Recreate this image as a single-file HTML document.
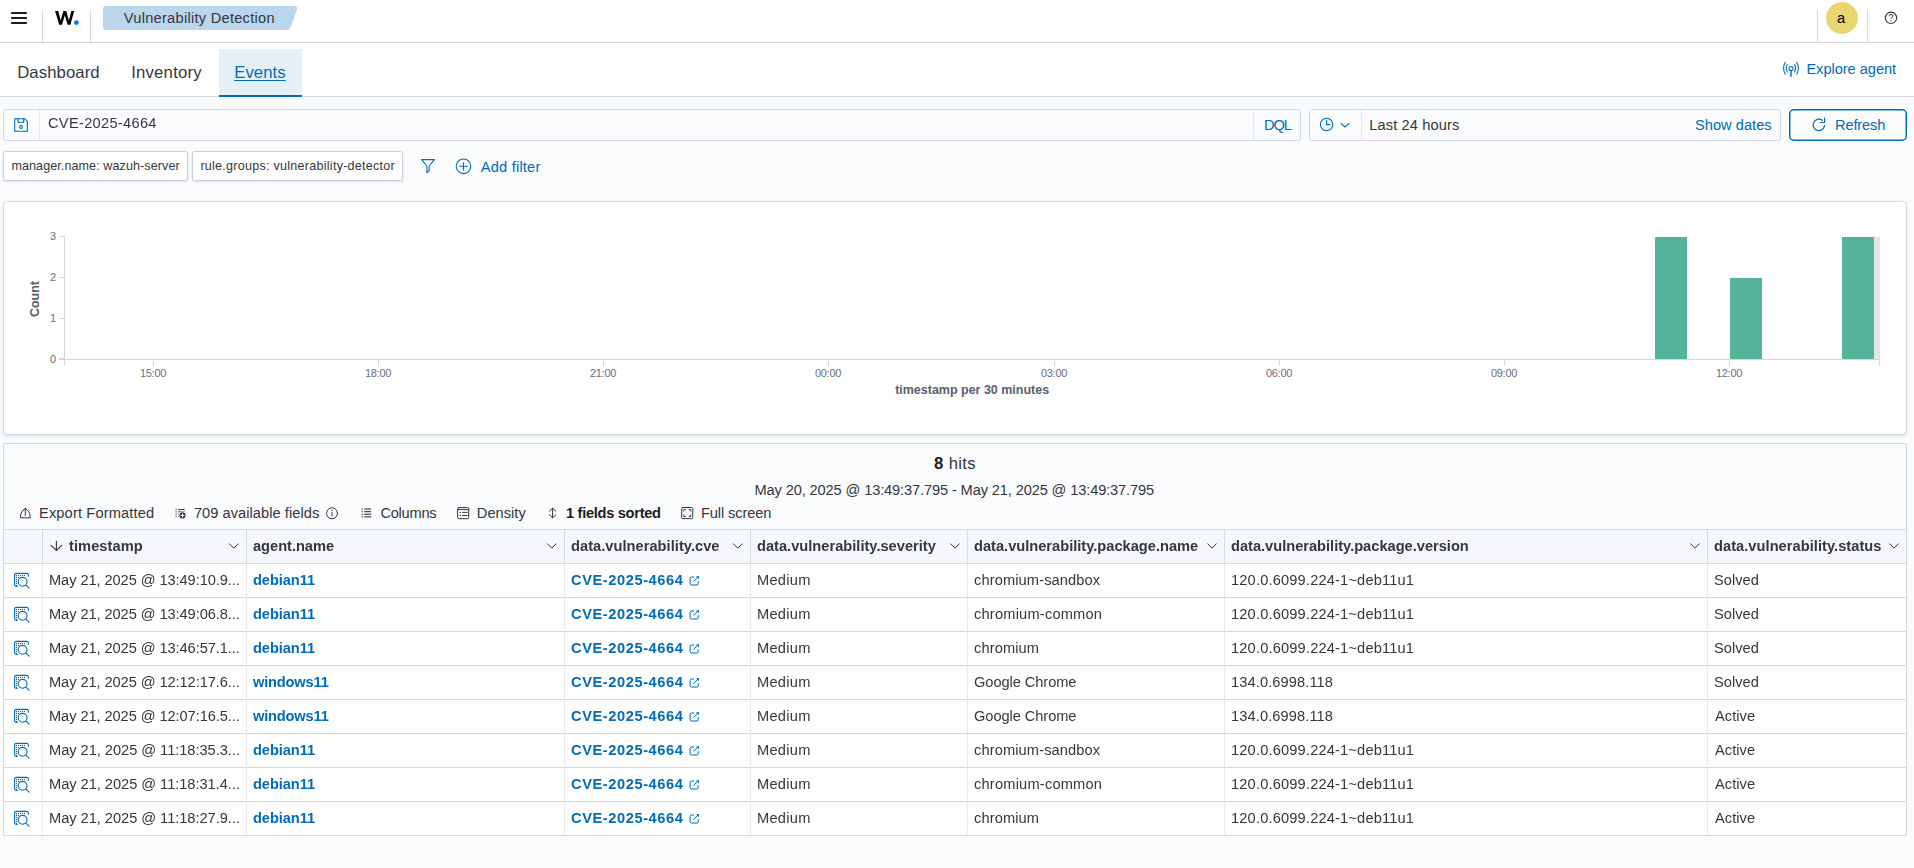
<!DOCTYPE html>
<html><head><meta charset="utf-8"><title>Wazuh - Vulnerability Detection</title>
<style>
html,body{margin:0;padding:0;}
body{width:1914px;height:868px;overflow:hidden;position:relative;background:#FAFBFD;font-family:"Liberation Sans",sans-serif;color:#343741;}
.t{position:absolute;white-space:nowrap;line-height:1;}
svg{position:absolute;overflow:visible;}
</style></head><body>
<svg width="1914" height="868" viewBox="0 0 1914 868" style="left:0;top:0"><defs><filter id="sh" x="-5%" y="-30%" width="110%" height="170%"><feDropShadow dx="0" dy="1" stdDeviation="0.8" flood-color="#98A2B3" flood-opacity="0.35"/></filter><filter id="sh2" x="-2%" y="-5%" width="104%" height="115%"><feDropShadow dx="0" dy="1.5" stdDeviation="1.5" flood-color="#98A2B3" flood-opacity="0.3"/></filter></defs><rect x="0" y="0" width="1914" height="42" fill="#FFFFFF" />
<rect x="0" y="42" width="1914" height="1" fill="#D3DAE6" />
<rect x="42" y="10" width="1" height="32" fill="#D3DAE6" />
<rect x="90" y="10" width="1" height="32" fill="#D3DAE6" />
<rect x="1817" y="10" width="1" height="32" fill="#D3DAE6" />
<rect x="1867" y="10" width="1" height="32" fill="#D3DAE6" />
<rect x="11" y="12" width="16" height="2" rx="0.8" fill="#1A1C21"/>
<rect x="11" y="17" width="16" height="2" rx="0.8" fill="#1A1C21"/>
<rect x="11" y="22" width="16" height="2" rx="0.8" fill="#1A1C21"/>
<path d="M55.1 11 L58.2 11 L60.7 20.6 L63.4 11 L66.2 11 L68.9 20.6 L71.3 11 L74.2 11 L70.4 24.8 L67.6 24.8 L64.8 15.2 L62 24.8 L59.2 24.8 Z" fill="#000"/>
<circle cx="76.4" cy="22.6" r="2.4" fill="#0077FF"/>
<path d="M106 6 L293.8 6 Q297.9 6 296.9 9.4 L290.6 27.4 Q289.6 30 286.6 30 L106 30 Q103 30 103 27 L103 9 Q103 6 106 6 Z" fill="#B9D6EB"/>
<circle cx="1842" cy="18" r="16" fill="#E9D66F"/>
<circle cx="1891" cy="17.8" r="5.7" fill="none" stroke="#343741" stroke-width="1.1"/>
<path d="M1889.3 16.3 Q1889.3 14.4 1891 14.4 Q1892.8 14.4 1892.8 16 Q1892.8 17 1891.6 17.6 Q1891 17.9 1891 18.9" fill="none" stroke="#343741" stroke-width="1"/>
<circle cx="1891" cy="20.7" r="0.6" fill="#343741"/>
<rect x="0" y="43" width="1914" height="53" fill="#FFFFFF" />
<rect x="0" y="96" width="1914" height="1" fill="#D3DAE6" />
<rect x="0" y="97" width="1914" height="1" fill="#FCFDFE" />
<rect x="219" y="49" width="83" height="46" fill="#E6F0F8" />
<rect x="219" y="95" width="83" height="2" fill="#006BB8" />
<g fill="none" stroke="#006BB8" stroke-width="1.05" stroke-linecap="round"><circle cx="1791" cy="68.5" r="2.1"/><path d="M1791 70.3 L1791 76.3" stroke-width="1.4"/><path d="M1787.3 64.5 Q1785.3 68.3 1787.3 72.1"/><path d="M1794.7 64.5 Q1796.7 68.3 1794.7 72.1"/><path d="M1785.2 62.3 Q1781.9 68.3 1785.2 74.3"/><path d="M1796.8 62.3 Q1800.1 68.3 1796.8 74.3"/></g>
<rect x="3.5" y="109.5" width="1297" height="31" rx="2" fill="#FBFCFD" stroke="#D3DAE6" stroke-width="1"/>
<rect x="39" y="110" width="1" height="30" fill="#E3E8F0" />
<rect x="1253" y="110" width="1" height="30" fill="#E3E8F0" />
<g fill="none" stroke="#006BB8" stroke-width="1.1" stroke-linejoin="round"><path d="M14.7 118.7 L24.7 118.7 L27.3 121.3 L27.3 131.3 L14.7 131.3 Z"/><path d="M18 118.7 L18 122.2 L23.7 122.2 L23.7 118.7"/><circle cx="21" cy="127" r="1.4"/></g>
<rect x="1309.5" y="109.5" width="471" height="31" rx="2" fill="#FBFCFD" stroke="#D3DAE6" stroke-width="1"/>
<rect x="1361" y="110" width="1" height="30" fill="#E3E8F0" />
<g fill="none" stroke="#006BB8" stroke-width="1.1" stroke-linecap="round"><circle cx="1326.6" cy="124.4" r="6.2"/><path d="M1326.6 120.3 L1326.6 124.6 L1329.7 124.6"/><path d="M1341 123.3 L1345 127 L1349 123.3"/></g>
<rect x="1789.75" y="109.75" width="116.5" height="30.5" rx="4" fill="#FBFCFD" stroke="#006BB8" stroke-width="1.5"/>
<g fill="none" stroke="#006BB8" stroke-width="1.2" stroke-linecap="round"><path d="M1822.3 120.3 A5.75 5.75 0 1 0 1824.6 125.3"/><path d="M1820.4 122.5 L1824.6 122.5 L1824.6 118.2"/></g>
<rect x="3.5" y="151.5" width="184" height="29" rx="2" fill="#FFFFFF" stroke="#C9D1DE" stroke-width="1" filter="url(#sh)"/>
<rect x="192.5" y="151.5" width="210" height="29" rx="2" fill="#FFFFFF" stroke="#C9D1DE" stroke-width="1" filter="url(#sh)"/>
<g fill="none" stroke="#006BB8" stroke-width="1.1" stroke-linejoin="round"><path d="M421.6 159.6 L434.4 159.6 L429.2 166 L429.2 170.6 L427.3 172.6 L426.9 172.6 L426.9 166 Z"/><circle cx="463.5" cy="166.3" r="7.3"/><path d="M463.5 162.2 L463.5 170.5 M459.3 166.3 L467.7 166.3"/></g>
<rect x="3.5" y="201.5" width="1903" height="233" rx="4" fill="#FFFFFF" stroke="#D3DAE6" stroke-width="1" filter="url(#sh2)"/>
<rect x="64" y="236" width="1" height="130" fill="#D6D6D6" />
<rect x="59" y="359" width="1821" height="1" fill="#D6D6D6" />
<rect x="59" y="236" width="5" height="1" fill="#D6D6D6" />
<rect x="59" y="277" width="5" height="1" fill="#D6D6D6" />
<rect x="59" y="318" width="5" height="1" fill="#D6D6D6" />
<rect x="59" y="358" width="5" height="1" fill="#D6D6D6" />
<rect x="153" y="359" width="1" height="7" fill="#D6D6D6" />
<rect x="378" y="359" width="1" height="7" fill="#D6D6D6" />
<rect x="603" y="359" width="1" height="7" fill="#D6D6D6" />
<rect x="828" y="359" width="1" height="7" fill="#D6D6D6" />
<rect x="1054" y="359" width="1" height="7" fill="#D6D6D6" />
<rect x="1279" y="359" width="1" height="7" fill="#D6D6D6" />
<rect x="1504" y="359" width="1" height="7" fill="#D6D6D6" />
<rect x="1729" y="359" width="1" height="7" fill="#D6D6D6" />
<rect x="1879" y="359" width="1" height="7" fill="#D6D6D6" />
<rect x="64" y="359" width="1" height="7" fill="#D6D6D6" />
<rect x="1655" y="237" width="32" height="122" fill="#54B399" />
<rect x="1730" y="278" width="32" height="81" fill="#54B399" />
<rect x="1842" y="237" width="32" height="122" fill="#54B399" />
<rect x="1874" y="237" width="6" height="122" fill="#E4E4E4" />
<rect x="3.5" y="443.5" width="1903" height="392" fill="#FAFBFD" stroke="#D3DAE6" stroke-width="1"/>
<rect x="4" y="530" width="1902" height="33" fill="#F5F7FA" />
<rect x="4" y="564" width="1902" height="271" fill="#FFFFFF" />
<rect x="3" y="529" width="1904" height="1" fill="#D3DAE6" />
<rect x="3" y="563" width="1904" height="1" fill="#D3DAE6" />
<rect x="3" y="597" width="1904" height="1" fill="#D3DAE6" />
<rect x="3" y="631" width="1904" height="1" fill="#D3DAE6" />
<rect x="3" y="665" width="1904" height="1" fill="#D3DAE6" />
<rect x="3" y="699" width="1904" height="1" fill="#D3DAE6" />
<rect x="3" y="733" width="1904" height="1" fill="#D3DAE6" />
<rect x="3" y="767" width="1904" height="1" fill="#D3DAE6" />
<rect x="3" y="801" width="1904" height="1" fill="#D3DAE6" />
<rect x="3" y="835" width="1904" height="1" fill="#D3DAE6" />
<rect x="42" y="530" width="1" height="33" fill="#D3DAE6" />
<rect x="42" y="564" width="1" height="271" fill="#E6EAF1" />
<rect x="246" y="530" width="1" height="33" fill="#D3DAE6" />
<rect x="246" y="564" width="1" height="271" fill="#E6EAF1" />
<rect x="564" y="530" width="1" height="33" fill="#D3DAE6" />
<rect x="564" y="564" width="1" height="271" fill="#E6EAF1" />
<rect x="750" y="530" width="1" height="33" fill="#D3DAE6" />
<rect x="750" y="564" width="1" height="271" fill="#E6EAF1" />
<rect x="967" y="530" width="1" height="33" fill="#D3DAE6" />
<rect x="967" y="564" width="1" height="271" fill="#E6EAF1" />
<rect x="1224" y="530" width="1" height="33" fill="#D3DAE6" />
<rect x="1224" y="564" width="1" height="271" fill="#E6EAF1" />
<rect x="1707" y="530" width="1" height="33" fill="#D3DAE6" />
<rect x="1707" y="564" width="1" height="271" fill="#E6EAF1" />
<rect x="3" y="529" width="1" height="307" fill="#D3DAE6" />
<rect x="1906" y="529" width="1" height="307" fill="#D3DAE6" />
<path d="M229.5 543.8 L233.8 548.2 L238.10000000000002 543.8" fill="none" stroke="#343741" stroke-width="1" stroke-linecap="round"/>
<path d="M547.5 543.8 L551.8 548.2 L556.0999999999999 543.8" fill="none" stroke="#343741" stroke-width="1" stroke-linecap="round"/>
<path d="M733.5 543.8 L737.8 548.2 L742.0999999999999 543.8" fill="none" stroke="#343741" stroke-width="1" stroke-linecap="round"/>
<path d="M950.7 543.8 L955 548.2 L959.3 543.8" fill="none" stroke="#343741" stroke-width="1" stroke-linecap="round"/>
<path d="M1207.7 543.8 L1212 548.2 L1216.3 543.8" fill="none" stroke="#343741" stroke-width="1" stroke-linecap="round"/>
<path d="M1690.7 543.8 L1695 548.2 L1699.3 543.8" fill="none" stroke="#343741" stroke-width="1" stroke-linecap="round"/>
<path d="M1889.7 543.8 L1894 548.2 L1898.3 543.8" fill="none" stroke="#343741" stroke-width="1" stroke-linecap="round"/>
<path d="M56.4 541.4 L56.4 550.4 M51.1 545.3 L56.4 550.5 L61.7 545.3" fill="none" stroke="#343741" stroke-width="1.1" stroke-linecap="round"/>
<g fill="none" stroke="#006BB8" stroke-width="1.1" stroke-linecap="round"><path d="M17.2 586.4 L16.4 586.4 Q14.6 586.4 14.6 584.6 L14.6 575.2 Q14.6 573.4 16.4 573.4 L26.6 573.4 Q28.4 573.4 28.4 575.2 L28.4 576.2"/><circle cx="22.6" cy="581.8" r="4.4"/><path d="M25.9 585.1 L29.1 588.2"/></g>
<g fill="#006BB8"><circle cx="16.5" cy="575.4" r="0.6"/><circle cx="18.5" cy="575.4" r="0.6"/><circle cx="20.5" cy="575.4" r="0.6"/><circle cx="22.5" cy="575.4" r="0.6"/><circle cx="24.5" cy="575.4" r="0.6"/><circle cx="16.5" cy="577.4" r="0.6"/><circle cx="16.5" cy="579.4" r="0.6"/><circle cx="16.5" cy="581.4" r="0.6"/><circle cx="16.5" cy="583.4" r="0.6"/><circle cx="16.5" cy="585.4" r="0.6"/><circle cx="18.5" cy="577.4" r="0.6"/></g>
<g fill="none" stroke="#006BB8" stroke-width="1" stroke-linecap="round" stroke-linejoin="round"><path d="M693.6 577 L691.4 577 Q690.1 577 690.1 578.3 L690.1 583.7 Q690.1 585 691.4 585 L696.9 585 Q698.2 585 698.2 583.7 L698.2 581.6"/><path d="M693.6 581.4 L698 577"/></g>
<path d="M699 576.2 L699 579.3 L695.9 576.2 Z" fill="#006BB8"/>
<g fill="none" stroke="#006BB8" stroke-width="1.1" stroke-linecap="round"><path d="M17.2 620.4 L16.4 620.4 Q14.6 620.4 14.6 618.6 L14.6 609.2 Q14.6 607.4 16.4 607.4 L26.6 607.4 Q28.4 607.4 28.4 609.2 L28.4 610.2"/><circle cx="22.6" cy="615.8" r="4.4"/><path d="M25.9 619.1 L29.1 622.2"/></g>
<g fill="#006BB8"><circle cx="16.5" cy="609.4" r="0.6"/><circle cx="18.5" cy="609.4" r="0.6"/><circle cx="20.5" cy="609.4" r="0.6"/><circle cx="22.5" cy="609.4" r="0.6"/><circle cx="24.5" cy="609.4" r="0.6"/><circle cx="16.5" cy="611.4" r="0.6"/><circle cx="16.5" cy="613.4" r="0.6"/><circle cx="16.5" cy="615.4" r="0.6"/><circle cx="16.5" cy="617.4" r="0.6"/><circle cx="16.5" cy="619.4" r="0.6"/><circle cx="18.5" cy="611.4" r="0.6"/></g>
<g fill="none" stroke="#006BB8" stroke-width="1" stroke-linecap="round" stroke-linejoin="round"><path d="M693.6 611 L691.4 611 Q690.1 611 690.1 612.3 L690.1 617.7 Q690.1 619 691.4 619 L696.9 619 Q698.2 619 698.2 617.7 L698.2 615.6"/><path d="M693.6 615.4 L698 611"/></g>
<path d="M699 610.2 L699 613.3 L695.9 610.2 Z" fill="#006BB8"/>
<g fill="none" stroke="#006BB8" stroke-width="1.1" stroke-linecap="round"><path d="M17.2 654.4 L16.4 654.4 Q14.6 654.4 14.6 652.6 L14.6 643.2 Q14.6 641.4 16.4 641.4 L26.6 641.4 Q28.4 641.4 28.4 643.2 L28.4 644.2"/><circle cx="22.6" cy="649.8" r="4.4"/><path d="M25.9 653.1 L29.1 656.2"/></g>
<g fill="#006BB8"><circle cx="16.5" cy="643.4" r="0.6"/><circle cx="18.5" cy="643.4" r="0.6"/><circle cx="20.5" cy="643.4" r="0.6"/><circle cx="22.5" cy="643.4" r="0.6"/><circle cx="24.5" cy="643.4" r="0.6"/><circle cx="16.5" cy="645.4" r="0.6"/><circle cx="16.5" cy="647.4" r="0.6"/><circle cx="16.5" cy="649.4" r="0.6"/><circle cx="16.5" cy="651.4" r="0.6"/><circle cx="16.5" cy="653.4" r="0.6"/><circle cx="18.5" cy="645.4" r="0.6"/></g>
<g fill="none" stroke="#006BB8" stroke-width="1" stroke-linecap="round" stroke-linejoin="round"><path d="M693.6 645 L691.4 645 Q690.1 645 690.1 646.3 L690.1 651.7 Q690.1 653 691.4 653 L696.9 653 Q698.2 653 698.2 651.7 L698.2 649.6"/><path d="M693.6 649.4 L698 645"/></g>
<path d="M699 644.2 L699 647.3 L695.9 644.2 Z" fill="#006BB8"/>
<g fill="none" stroke="#006BB8" stroke-width="1.1" stroke-linecap="round"><path d="M17.2 688.4 L16.4 688.4 Q14.6 688.4 14.6 686.6 L14.6 677.2 Q14.6 675.4 16.4 675.4 L26.6 675.4 Q28.4 675.4 28.4 677.2 L28.4 678.2"/><circle cx="22.6" cy="683.8" r="4.4"/><path d="M25.9 687.1 L29.1 690.2"/></g>
<g fill="#006BB8"><circle cx="16.5" cy="677.4" r="0.6"/><circle cx="18.5" cy="677.4" r="0.6"/><circle cx="20.5" cy="677.4" r="0.6"/><circle cx="22.5" cy="677.4" r="0.6"/><circle cx="24.5" cy="677.4" r="0.6"/><circle cx="16.5" cy="679.4" r="0.6"/><circle cx="16.5" cy="681.4" r="0.6"/><circle cx="16.5" cy="683.4" r="0.6"/><circle cx="16.5" cy="685.4" r="0.6"/><circle cx="16.5" cy="687.4" r="0.6"/><circle cx="18.5" cy="679.4" r="0.6"/></g>
<g fill="none" stroke="#006BB8" stroke-width="1" stroke-linecap="round" stroke-linejoin="round"><path d="M693.6 679 L691.4 679 Q690.1 679 690.1 680.3 L690.1 685.7 Q690.1 687 691.4 687 L696.9 687 Q698.2 687 698.2 685.7 L698.2 683.6"/><path d="M693.6 683.4 L698 679"/></g>
<path d="M699 678.2 L699 681.3 L695.9 678.2 Z" fill="#006BB8"/>
<g fill="none" stroke="#006BB8" stroke-width="1.1" stroke-linecap="round"><path d="M17.2 722.4 L16.4 722.4 Q14.6 722.4 14.6 720.6 L14.6 711.2 Q14.6 709.4 16.4 709.4 L26.6 709.4 Q28.4 709.4 28.4 711.2 L28.4 712.2"/><circle cx="22.6" cy="717.8" r="4.4"/><path d="M25.9 721.1 L29.1 724.2"/></g>
<g fill="#006BB8"><circle cx="16.5" cy="711.4" r="0.6"/><circle cx="18.5" cy="711.4" r="0.6"/><circle cx="20.5" cy="711.4" r="0.6"/><circle cx="22.5" cy="711.4" r="0.6"/><circle cx="24.5" cy="711.4" r="0.6"/><circle cx="16.5" cy="713.4" r="0.6"/><circle cx="16.5" cy="715.4" r="0.6"/><circle cx="16.5" cy="717.4" r="0.6"/><circle cx="16.5" cy="719.4" r="0.6"/><circle cx="16.5" cy="721.4" r="0.6"/><circle cx="18.5" cy="713.4" r="0.6"/></g>
<g fill="none" stroke="#006BB8" stroke-width="1" stroke-linecap="round" stroke-linejoin="round"><path d="M693.6 713 L691.4 713 Q690.1 713 690.1 714.3 L690.1 719.7 Q690.1 721 691.4 721 L696.9 721 Q698.2 721 698.2 719.7 L698.2 717.6"/><path d="M693.6 717.4 L698 713"/></g>
<path d="M699 712.2 L699 715.3 L695.9 712.2 Z" fill="#006BB8"/>
<g fill="none" stroke="#006BB8" stroke-width="1.1" stroke-linecap="round"><path d="M17.2 756.4 L16.4 756.4 Q14.6 756.4 14.6 754.6 L14.6 745.2 Q14.6 743.4 16.4 743.4 L26.6 743.4 Q28.4 743.4 28.4 745.2 L28.4 746.2"/><circle cx="22.6" cy="751.8" r="4.4"/><path d="M25.9 755.1 L29.1 758.2"/></g>
<g fill="#006BB8"><circle cx="16.5" cy="745.4" r="0.6"/><circle cx="18.5" cy="745.4" r="0.6"/><circle cx="20.5" cy="745.4" r="0.6"/><circle cx="22.5" cy="745.4" r="0.6"/><circle cx="24.5" cy="745.4" r="0.6"/><circle cx="16.5" cy="747.4" r="0.6"/><circle cx="16.5" cy="749.4" r="0.6"/><circle cx="16.5" cy="751.4" r="0.6"/><circle cx="16.5" cy="753.4" r="0.6"/><circle cx="16.5" cy="755.4" r="0.6"/><circle cx="18.5" cy="747.4" r="0.6"/></g>
<g fill="none" stroke="#006BB8" stroke-width="1" stroke-linecap="round" stroke-linejoin="round"><path d="M693.6 747 L691.4 747 Q690.1 747 690.1 748.3 L690.1 753.7 Q690.1 755 691.4 755 L696.9 755 Q698.2 755 698.2 753.7 L698.2 751.6"/><path d="M693.6 751.4 L698 747"/></g>
<path d="M699 746.2 L699 749.3 L695.9 746.2 Z" fill="#006BB8"/>
<g fill="none" stroke="#006BB8" stroke-width="1.1" stroke-linecap="round"><path d="M17.2 790.4 L16.4 790.4 Q14.6 790.4 14.6 788.6 L14.6 779.2 Q14.6 777.4 16.4 777.4 L26.6 777.4 Q28.4 777.4 28.4 779.2 L28.4 780.2"/><circle cx="22.6" cy="785.8" r="4.4"/><path d="M25.9 789.1 L29.1 792.2"/></g>
<g fill="#006BB8"><circle cx="16.5" cy="779.4" r="0.6"/><circle cx="18.5" cy="779.4" r="0.6"/><circle cx="20.5" cy="779.4" r="0.6"/><circle cx="22.5" cy="779.4" r="0.6"/><circle cx="24.5" cy="779.4" r="0.6"/><circle cx="16.5" cy="781.4" r="0.6"/><circle cx="16.5" cy="783.4" r="0.6"/><circle cx="16.5" cy="785.4" r="0.6"/><circle cx="16.5" cy="787.4" r="0.6"/><circle cx="16.5" cy="789.4" r="0.6"/><circle cx="18.5" cy="781.4" r="0.6"/></g>
<g fill="none" stroke="#006BB8" stroke-width="1" stroke-linecap="round" stroke-linejoin="round"><path d="M693.6 781 L691.4 781 Q690.1 781 690.1 782.3 L690.1 787.7 Q690.1 789 691.4 789 L696.9 789 Q698.2 789 698.2 787.7 L698.2 785.6"/><path d="M693.6 785.4 L698 781"/></g>
<path d="M699 780.2 L699 783.3 L695.9 780.2 Z" fill="#006BB8"/>
<g fill="none" stroke="#006BB8" stroke-width="1.1" stroke-linecap="round"><path d="M17.2 824.4 L16.4 824.4 Q14.6 824.4 14.6 822.6 L14.6 813.2 Q14.6 811.4 16.4 811.4 L26.6 811.4 Q28.4 811.4 28.4 813.2 L28.4 814.2"/><circle cx="22.6" cy="819.8" r="4.4"/><path d="M25.9 823.1 L29.1 826.2"/></g>
<g fill="#006BB8"><circle cx="16.5" cy="813.4" r="0.6"/><circle cx="18.5" cy="813.4" r="0.6"/><circle cx="20.5" cy="813.4" r="0.6"/><circle cx="22.5" cy="813.4" r="0.6"/><circle cx="24.5" cy="813.4" r="0.6"/><circle cx="16.5" cy="815.4" r="0.6"/><circle cx="16.5" cy="817.4" r="0.6"/><circle cx="16.5" cy="819.4" r="0.6"/><circle cx="16.5" cy="821.4" r="0.6"/><circle cx="16.5" cy="823.4" r="0.6"/><circle cx="18.5" cy="815.4" r="0.6"/></g>
<g fill="none" stroke="#006BB8" stroke-width="1" stroke-linecap="round" stroke-linejoin="round"><path d="M693.6 815 L691.4 815 Q690.1 815 690.1 816.3 L690.1 821.7 Q690.1 823 691.4 823 L696.9 823 Q698.2 823 698.2 821.7 L698.2 819.6"/><path d="M693.6 819.4 L698 815"/></g>
<path d="M699 814.2 L699 817.3 L695.9 814.2 Z" fill="#006BB8"/>
<g fill="none" stroke="#343741" stroke-width="1" stroke-linecap="round" stroke-linejoin="round"><path d="M22.7 510.5 Q20.3 512.5 20.3 517.8 L30.3 517.8 Q30.3 512.5 27.9 510.5"/><path d="M25.3 515.5 L25.3 508.3 M23.2 510.3 L25.3 508.3 L27.4 510.3"/><circle cx="332" cy="513.3" r="5.5"/><path d="M332 512.3 L332 516"/><rect x="457.6" y="507.6" width="11.1" height="11.1" rx="1.2"/><path d="M457.6 509.6 L468.7 509.6 M462.6 512.4 L467.2 512.4 M462.6 515.5 L467.2 515.5"/><path d="M552.6 508.4 L552.6 517.6 M549.4 511.2 L552.6 508.2 L555.8 511.2 M549.4 514.8 L552.6 517.8 L555.8 514.8"/><rect x="681.7" y="507.5" width="11.1" height="11.1" rx="1.2"/><path d="M683.8 511.2 L683.8 509.6 L685.4 509.6 M689.2 509.6 L690.8 509.6 L690.8 511.2 M690.8 514.9 L690.8 516.5 L689.2 516.5 M685.4 516.5 L683.8 516.5 L683.8 514.9"/></g>
<circle cx="332" cy="510.4" r="0.7" fill="#343741"/>
<g fill="#343741"><circle cx="460.2" cy="512.4" r="0.7"/><circle cx="460.2" cy="515.5" r="0.7"/></g>
<g fill="#343741"><rect x="361.5" y="508.5" width="1.3" height="1.1"/><rect x="364.3" y="508.5" width="6.8" height="1.1"/><rect x="361.5" y="511.1" width="1.3" height="1.1"/><rect x="364.3" y="511.1" width="6.8" height="1.1"/><rect x="361.5" y="513.7" width="1.3" height="1.1"/><rect x="364.3" y="513.7" width="6.8" height="1.1"/><rect x="361.5" y="516.3" width="1.3" height="1.1"/><rect x="364.3" y="516.3" width="6.8" height="1.1"/></g>
<g fill="#343741"><rect x="175.5" y="509.0" width="1.2" height="1"/><rect x="178.3" y="509.0" width="6.3" height="1"/><rect x="175.5" y="511.3" width="1.2" height="1"/><rect x="178.3" y="511.3" width="6.3" height="1"/><rect x="175.5" y="513.6" width="1.2" height="1"/><rect x="178.3" y="513.6" width="6.3" height="1"/><rect x="175.5" y="515.9" width="1.2" height="1"/><rect x="178.3" y="515.9" width="6.3" height="1"/></g>
<circle cx="182.5" cy="515.4" r="3.6" fill="#343741" stroke="#FAFBFD" stroke-width="0.9"/>
<path d="M182.5 513.5 L182.5 517.3 M180.6 515.4 L184.4 515.4" stroke="#FFF" stroke-width="1"/></svg>
<div class="t" style="left:123.80px;top:11px;font-size:14.63px;font-weight:400;color:#343741;letter-spacing:0.263px;">Vulnerability Detection</div>
<div class="t" style="left:17.20px;top:65px;font-size:16.72px;font-weight:400;color:#343741;letter-spacing:0.089px;">Dashboard</div>
<div class="t" style="left:131.20px;top:65px;font-size:16.72px;font-weight:400;color:#343741;letter-spacing:0.216px;">Inventory</div>
<div class="t" style="left:234.20px;top:65px;font-size:16.72px;font-weight:400;color:#006BB8;letter-spacing:0.077px;text-decoration:underline;text-underline-offset:2px;">Events</div>
<div class="t" style="left:1806.40px;top:62px;font-size:14.63px;font-weight:400;color:#006BB8;letter-spacing:-0.039px;">Explore agent</div>
<div class="t" style="left:47.70px;top:116px;font-size:14.63px;font-weight:400;color:#343741;letter-spacing:0.299px;will-change:transform;">CVE-2025-4664</div>
<div class="t" style="left:1264.00px;top:118px;font-size:14.63px;font-weight:400;color:#006BB8;letter-spacing:-1.140px;">DQL</div>
<div class="t" style="left:1369.20px;top:118px;font-size:14.63px;font-weight:400;color:#343741;letter-spacing:0.130px;">Last 24 hours</div>
<div class="t" style="left:1695.00px;top:118px;font-size:14.63px;font-weight:400;color:#006BB8;letter-spacing:0.028px;">Show dates</div>
<div class="t" style="left:1835.00px;top:118px;font-size:14.63px;font-weight:400;color:#006BB8;letter-spacing:-0.137px;">Refresh</div>
<div class="t" style="left:11.40px;top:160px;font-size:12.54px;font-weight:400;color:#343741;letter-spacing:0.099px;">manager.name: wazuh-server</div>
<div class="t" style="left:200.40px;top:160px;font-size:12.54px;font-weight:400;color:#343741;letter-spacing:0.268px;">rule.groups: vulnerability-detector</div>
<div class="t" style="left:480.80px;top:160px;font-size:14.63px;font-weight:400;color:#006BB8;letter-spacing:0.197px;">Add filter</div>
<div class="t" style="left:895.15px;top:384px;font-size:12.5px;font-weight:700;color:#5A606B;letter-spacing:-0.011px;">timestamp per 30 minutes</div>
<div class="t" style="left:754.50px;top:483px;font-size:14.63px;font-weight:400;color:#343741;letter-spacing:-0.130px;">May 20, 2025 @ 13:49:37.795 - May 21, 2025 @ 13:49:37.795</div>
<div class="t" style="left:39.00px;top:506px;font-size:14.63px;font-weight:400;color:#343741;letter-spacing:0.139px;">Export Formatted</div>
<div class="t" style="left:193.90px;top:506px;font-size:14.63px;font-weight:400;color:#343741;letter-spacing:0.048px;">709 available fields</div>
<div class="t" style="left:380.40px;top:506px;font-size:14.63px;font-weight:400;color:#343741;letter-spacing:-0.237px;">Columns</div>
<div class="t" style="left:476.80px;top:506px;font-size:14.63px;font-weight:400;color:#343741;letter-spacing:0.028px;">Density</div>
<div class="t" style="left:566.00px;top:506px;font-size:14.63px;font-weight:700;color:#1a1c21;letter-spacing:-0.299px;">1 fields sorted</div>
<div class="t" style="left:700.90px;top:506px;font-size:14.63px;font-weight:400;color:#343741;letter-spacing:-0.095px;">Full screen</div>
<div class="t" style="left:68.70px;top:539px;font-size:14.63px;font-weight:700;color:#343741;letter-spacing:0.066px;will-change:transform;">timestamp</div>
<div class="t" style="left:252.50px;top:539px;font-size:14.63px;font-weight:700;color:#343741;letter-spacing:-0.022px;will-change:transform;">agent.name</div>
<div class="t" style="left:570.50px;top:539px;font-size:14.63px;font-weight:700;color:#343741;letter-spacing:0.038px;will-change:transform;">data.vulnerability.cve</div>
<div class="t" style="left:756.85px;top:539px;font-size:14.63px;font-weight:700;color:#343741;letter-spacing:0.011px;will-change:transform;">data.vulnerability.severity</div>
<div class="t" style="left:974.00px;top:539px;font-size:14.63px;font-weight:700;color:#343741;letter-spacing:0.003px;will-change:transform;">data.vulnerability.package.name</div>
<div class="t" style="left:1231.40px;top:539px;font-size:14.63px;font-weight:700;color:#343741;letter-spacing:-0.004px;will-change:transform;">data.vulnerability.package.version</div>
<div class="t" style="left:1714.40px;top:539px;font-size:14.63px;font-weight:700;color:#343741;letter-spacing:0.047px;will-change:transform;">data.vulnerability.status</div>
<div class="t" style="left:48.80px;top:573px;font-size:14.63px;font-weight:400;color:#343741;letter-spacing:-0.076px;will-change:transform;">May 21, 2025 @ 13:49:10.9...</div>
<div class="t" style="left:252.50px;top:573px;font-size:14.63px;font-weight:700;color:#006BB8;letter-spacing:-0.080px;will-change:transform;">debian11</div>
<div class="t" style="left:571.10px;top:573px;font-size:14.63px;font-weight:700;color:#006BB8;letter-spacing:0.582px;will-change:transform;">CVE-2025-4664</div>
<div class="t" style="left:756.90px;top:573px;font-size:14.63px;font-weight:400;color:#343741;letter-spacing:0.274px;will-change:transform;">Medium</div>
<div class="t" style="left:974.00px;top:573px;font-size:14.63px;font-weight:400;color:#343741;letter-spacing:0.120px;will-change:transform;">chromium-sandbox</div>
<div class="t" style="left:1231.20px;top:573px;font-size:14.63px;font-weight:400;color:#343741;letter-spacing:0.170px;will-change:transform;">120.0.6099.224-1~deb11u1</div>
<div class="t" style="left:1713.70px;top:573px;font-size:14.63px;font-weight:400;color:#343741;letter-spacing:0.034px;will-change:transform;">Solved</div>
<div class="t" style="left:48.80px;top:607px;font-size:14.63px;font-weight:400;color:#343741;letter-spacing:-0.076px;will-change:transform;">May 21, 2025 @ 13:49:06.8...</div>
<div class="t" style="left:252.50px;top:607px;font-size:14.63px;font-weight:700;color:#006BB8;letter-spacing:-0.080px;will-change:transform;">debian11</div>
<div class="t" style="left:571.10px;top:607px;font-size:14.63px;font-weight:700;color:#006BB8;letter-spacing:0.582px;will-change:transform;">CVE-2025-4664</div>
<div class="t" style="left:756.90px;top:607px;font-size:14.63px;font-weight:400;color:#343741;letter-spacing:0.274px;will-change:transform;">Medium</div>
<div class="t" style="left:974.00px;top:607px;font-size:14.63px;font-weight:400;color:#343741;letter-spacing:0.201px;will-change:transform;">chromium-common</div>
<div class="t" style="left:1231.20px;top:607px;font-size:14.63px;font-weight:400;color:#343741;letter-spacing:0.170px;will-change:transform;">120.0.6099.224-1~deb11u1</div>
<div class="t" style="left:1713.70px;top:607px;font-size:14.63px;font-weight:400;color:#343741;letter-spacing:0.034px;will-change:transform;">Solved</div>
<div class="t" style="left:48.80px;top:641px;font-size:14.63px;font-weight:400;color:#343741;letter-spacing:-0.076px;will-change:transform;">May 21, 2025 @ 13:46:57.1...</div>
<div class="t" style="left:252.50px;top:641px;font-size:14.63px;font-weight:700;color:#006BB8;letter-spacing:-0.080px;will-change:transform;">debian11</div>
<div class="t" style="left:571.10px;top:641px;font-size:14.63px;font-weight:700;color:#006BB8;letter-spacing:0.582px;will-change:transform;">CVE-2025-4664</div>
<div class="t" style="left:756.90px;top:641px;font-size:14.63px;font-weight:400;color:#343741;letter-spacing:0.274px;will-change:transform;">Medium</div>
<div class="t" style="left:974.00px;top:641px;font-size:14.63px;font-weight:400;color:#343741;letter-spacing:0.112px;will-change:transform;">chromium</div>
<div class="t" style="left:1231.20px;top:641px;font-size:14.63px;font-weight:400;color:#343741;letter-spacing:0.170px;will-change:transform;">120.0.6099.224-1~deb11u1</div>
<div class="t" style="left:1713.70px;top:641px;font-size:14.63px;font-weight:400;color:#343741;letter-spacing:0.034px;will-change:transform;">Solved</div>
<div class="t" style="left:48.80px;top:675px;font-size:14.63px;font-weight:400;color:#343741;letter-spacing:-0.076px;will-change:transform;">May 21, 2025 @ 12:12:17.6...</div>
<div class="t" style="left:253.15px;top:675px;font-size:14.63px;font-weight:700;color:#006BB8;letter-spacing:-0.179px;will-change:transform;">windows11</div>
<div class="t" style="left:571.10px;top:675px;font-size:14.63px;font-weight:700;color:#006BB8;letter-spacing:0.582px;will-change:transform;">CVE-2025-4664</div>
<div class="t" style="left:756.90px;top:675px;font-size:14.63px;font-weight:400;color:#343741;letter-spacing:0.274px;will-change:transform;">Medium</div>
<div class="t" style="left:974.00px;top:675px;font-size:14.63px;font-weight:400;color:#343741;letter-spacing:-0.064px;will-change:transform;">Google Chrome</div>
<div class="t" style="left:1231.20px;top:675px;font-size:14.63px;font-weight:400;color:#343741;letter-spacing:0.108px;will-change:transform;">134.0.6998.118</div>
<div class="t" style="left:1713.70px;top:675px;font-size:14.63px;font-weight:400;color:#343741;letter-spacing:0.034px;will-change:transform;">Solved</div>
<div class="t" style="left:48.80px;top:709px;font-size:14.63px;font-weight:400;color:#343741;letter-spacing:-0.076px;will-change:transform;">May 21, 2025 @ 12:07:16.5...</div>
<div class="t" style="left:253.15px;top:709px;font-size:14.63px;font-weight:700;color:#006BB8;letter-spacing:-0.179px;will-change:transform;">windows11</div>
<div class="t" style="left:571.10px;top:709px;font-size:14.63px;font-weight:700;color:#006BB8;letter-spacing:0.582px;will-change:transform;">CVE-2025-4664</div>
<div class="t" style="left:756.90px;top:709px;font-size:14.63px;font-weight:400;color:#343741;letter-spacing:0.274px;will-change:transform;">Medium</div>
<div class="t" style="left:974.00px;top:709px;font-size:14.63px;font-weight:400;color:#343741;letter-spacing:-0.064px;will-change:transform;">Google Chrome</div>
<div class="t" style="left:1231.20px;top:709px;font-size:14.63px;font-weight:400;color:#343741;letter-spacing:0.108px;will-change:transform;">134.0.6998.118</div>
<div class="t" style="left:1714.70px;top:709px;font-size:14.63px;font-weight:400;color:#343741;letter-spacing:0.052px;will-change:transform;">Active</div>
<div class="t" style="left:48.80px;top:743px;font-size:14.63px;font-weight:400;color:#343741;letter-spacing:-0.032px;will-change:transform;">May 21, 2025 @ 11:18:35.3...</div>
<div class="t" style="left:252.50px;top:743px;font-size:14.63px;font-weight:700;color:#006BB8;letter-spacing:-0.080px;will-change:transform;">debian11</div>
<div class="t" style="left:571.10px;top:743px;font-size:14.63px;font-weight:700;color:#006BB8;letter-spacing:0.582px;will-change:transform;">CVE-2025-4664</div>
<div class="t" style="left:756.90px;top:743px;font-size:14.63px;font-weight:400;color:#343741;letter-spacing:0.274px;will-change:transform;">Medium</div>
<div class="t" style="left:974.00px;top:743px;font-size:14.63px;font-weight:400;color:#343741;letter-spacing:0.120px;will-change:transform;">chromium-sandbox</div>
<div class="t" style="left:1231.20px;top:743px;font-size:14.63px;font-weight:400;color:#343741;letter-spacing:0.170px;will-change:transform;">120.0.6099.224-1~deb11u1</div>
<div class="t" style="left:1714.70px;top:743px;font-size:14.63px;font-weight:400;color:#343741;letter-spacing:0.052px;will-change:transform;">Active</div>
<div class="t" style="left:48.80px;top:777px;font-size:14.63px;font-weight:400;color:#343741;letter-spacing:-0.032px;will-change:transform;">May 21, 2025 @ 11:18:31.4...</div>
<div class="t" style="left:252.50px;top:777px;font-size:14.63px;font-weight:700;color:#006BB8;letter-spacing:-0.080px;will-change:transform;">debian11</div>
<div class="t" style="left:571.10px;top:777px;font-size:14.63px;font-weight:700;color:#006BB8;letter-spacing:0.582px;will-change:transform;">CVE-2025-4664</div>
<div class="t" style="left:756.90px;top:777px;font-size:14.63px;font-weight:400;color:#343741;letter-spacing:0.274px;will-change:transform;">Medium</div>
<div class="t" style="left:974.00px;top:777px;font-size:14.63px;font-weight:400;color:#343741;letter-spacing:0.201px;will-change:transform;">chromium-common</div>
<div class="t" style="left:1231.20px;top:777px;font-size:14.63px;font-weight:400;color:#343741;letter-spacing:0.170px;will-change:transform;">120.0.6099.224-1~deb11u1</div>
<div class="t" style="left:1714.70px;top:777px;font-size:14.63px;font-weight:400;color:#343741;letter-spacing:0.052px;will-change:transform;">Active</div>
<div class="t" style="left:48.80px;top:811px;font-size:14.63px;font-weight:400;color:#343741;letter-spacing:-0.032px;will-change:transform;">May 21, 2025 @ 11:18:27.9...</div>
<div class="t" style="left:252.50px;top:811px;font-size:14.63px;font-weight:700;color:#006BB8;letter-spacing:-0.080px;will-change:transform;">debian11</div>
<div class="t" style="left:571.10px;top:811px;font-size:14.63px;font-weight:700;color:#006BB8;letter-spacing:0.582px;will-change:transform;">CVE-2025-4664</div>
<div class="t" style="left:756.90px;top:811px;font-size:14.63px;font-weight:400;color:#343741;letter-spacing:0.274px;will-change:transform;">Medium</div>
<div class="t" style="left:974.00px;top:811px;font-size:14.63px;font-weight:400;color:#343741;letter-spacing:0.112px;will-change:transform;">chromium</div>
<div class="t" style="left:1231.20px;top:811px;font-size:14.63px;font-weight:400;color:#343741;letter-spacing:0.170px;will-change:transform;">120.0.6099.224-1~deb11u1</div>
<div class="t" style="left:1714.70px;top:811px;font-size:14.63px;font-weight:400;color:#343741;letter-spacing:0.052px;will-change:transform;">Active</div>

<div class="t" style="left:934px;top:456px;font-size:16.72px;color:#343741;letter-spacing:0.35px"><b style="color:#1a1c21">8</b> hits</div>
<div class="t" style="left:1837px;top:11px;font-size:14.63px;color:#000;">a</div>
<div class="t" style="left:48px;top:231px;font-size:11px;color:#69707D;width:8px;text-align:right">3</div>
<div class="t" style="left:48px;top:272px;font-size:11px;color:#69707D;width:8px;text-align:right">2</div>
<div class="t" style="left:48px;top:313px;font-size:11px;color:#69707D;width:8px;text-align:right">1</div>
<div class="t" style="left:48px;top:354px;font-size:11px;color:#69707D;width:8px;text-align:right">0</div>
<div class="t" style="left:123px;top:368px;width:60px;text-align:center;font-size:11px;color:#69707D;letter-spacing:-0.3px">15:00</div>
<div class="t" style="left:348px;top:368px;width:60px;text-align:center;font-size:11px;color:#69707D;letter-spacing:-0.3px">18:00</div>
<div class="t" style="left:573px;top:368px;width:60px;text-align:center;font-size:11px;color:#69707D;letter-spacing:-0.3px">21:00</div>
<div class="t" style="left:798px;top:368px;width:60px;text-align:center;font-size:11px;color:#69707D;letter-spacing:-0.3px">00:00</div>
<div class="t" style="left:1024px;top:368px;width:60px;text-align:center;font-size:11px;color:#69707D;letter-spacing:-0.3px">03:00</div>
<div class="t" style="left:1249px;top:368px;width:60px;text-align:center;font-size:11px;color:#69707D;letter-spacing:-0.3px">06:00</div>
<div class="t" style="left:1474px;top:368px;width:60px;text-align:center;font-size:11px;color:#69707D;letter-spacing:-0.3px">09:00</div>
<div class="t" style="left:1699px;top:368px;width:60px;text-align:center;font-size:11px;color:#69707D;letter-spacing:-0.3px">12:00</div>
<div class="t" style="left:4.5px;top:292.5px;width:60px;text-align:center;font-size:12.5px;font-weight:700;color:#5A606B;transform:rotate(-90deg);line-height:12px">Count</div>

</body></html>
